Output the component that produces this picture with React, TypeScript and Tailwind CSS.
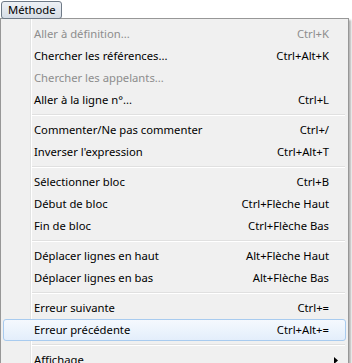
import React from "react";

type Item =
  | { sep: true }
  | { label: string; sc?: string; disabled?: boolean; hot?: boolean; sub?: boolean; sep?: false };

const items: Item[] = [
  { label: "Aller à définition...", sc: "Ctrl+K", disabled: true },
  { label: "Chercher les références...", sc: "Ctrl+Alt+K" },
  { label: "Chercher les appelants...", disabled: true },
  { label: "Aller à la ligne n°...", sc: "Ctrl+L" },
  { sep: true },
  { label: "Commenter/Ne pas commenter", sc: "Ctrl+/" },
  { label: "Inverser l'expression", sc: "Ctrl+Alt+T" },
  { sep: true },
  { label: "Sélectionner bloc", sc: "Ctrl+B" },
  { label: "Début de bloc", sc: "Ctrl+Flèche Haut" },
  { label: "Fin de bloc", sc: "Ctrl+Flèche Bas" },
  { sep: true },
  { label: "Déplacer lignes en haut", sc: "Alt+Flèche Haut" },
  { label: "Déplacer lignes en bas", sc: "Alt+Flèche Bas" },
  { sep: true },
  { label: "Erreur suivante", sc: "Ctrl+=" },
  { label: "Erreur précédente", sc: "Ctrl+Alt+=", hot: true },
  { sep: true },
  { label: "Affichage", sub: true },
];

export default function App() {
  return (
    <div
      className="w-[352px] h-[363px] bg-white overflow-hidden text-[11.25px] text-black"
      style={{ fontFamily: '"Noto Sans", "Open Sans", sans-serif' }}
    >
      {/* menu bar */}
      <div className="h-[19px] flex items-start pl-[1px] pt-[1px]">
        <div className="h-[18px] pl-[6px] pr-[5px] flex items-center rounded-[3px] border border-[#6f7a87] bg-gradient-to-b from-[#eef1f5] to-[#d6dde6] leading-none">
          <span>Méthode</span>
        </div>
      </div>

      {/* popup menu */}
      <div className="w-[349px] -mt-[1px] border border-[#979797] bg-[linear-gradient(to_right,#f0f0f0_29px,#e2e3e3_29px,#e2e3e3_30px,#ffffff_30px,#ffffff_31px,#f0f0f0_31px)] pt-[4px] pb-[2px] px-[2px] shadow-[2px_2px_2px_rgba(0,0,0,0.3)]">
        {items.map((it, i) =>
          it.sep ? (
            <div key={i} className="h-[8px] flex flex-col justify-center pl-[29px] pr-[1px]">
              <div className="h-[1px] bg-[#e0e0e0]" />
              <div className="h-[1px] bg-white" />
            </div>
          ) : (
            <div
              key={i}
              className={
                "h-[22px] flex items-center pl-[30px] " +
                (it.sub ? "pr-[7px] " : "pr-[16px] ") +
                (it.hot
                  ? "rounded-[3px] border border-[#a8cbef] bg-gradient-to-b from-[#f5f9fe] to-[#e3eefb]"
                  : "border border-transparent")
              }
            >
              <span className={it.disabled ? "text-[#8d8d8d]" : "text-black"}>{it.label}</span>
              <span className="flex-1" />
              {it.sc && <span className={it.disabled ? "text-[#8d8d8d]" : "text-black"}>{it.sc}</span>}
              {it.sub && (
                <svg width="4" height="7" viewBox="0 0 4 7">
                  <path d="M0 0 L4 3.5 L0 7 Z" fill="#000" />
                </svg>
              )}
            </div>
          )
        )}
      </div>
    </div>
  );
}
